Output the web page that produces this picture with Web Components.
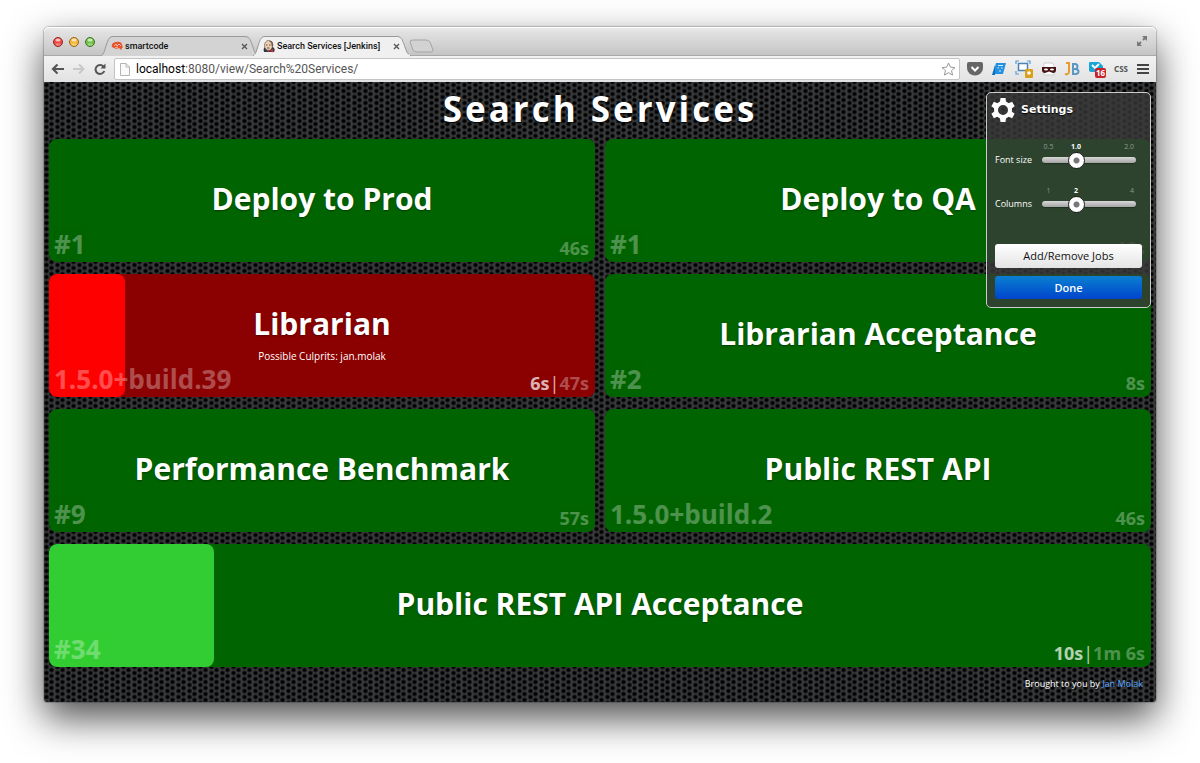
<!DOCTYPE html>
<html lang="en">
<head>
<meta charset="utf-8">
<title>Search Services [Jenkins]</title>
<style>
  body { margin: 0; background: #fff; font-family: "Open Sans", "Noto Sans", sans-serif; }
</style>
</head>
<body>
<browser-window>
  <browser-tab slot="tabs" label="smartcode">
    <svg slot="icon" width="12" height="10" viewBox="0 0 12 10"><path d="M1 6C0 4 2 1 5 1c3-1 6 0 6 3 1 1 1 3 0 3l-1 2-2-2-3 1-2-1z" fill="#e8532b"/><path d="M3 5l2-2 1 2 2-2 2 2M4 7l3-1" stroke="#fbd0c0" fill="none" stroke-width=".8"/></svg>
  </browser-tab>
  <browser-tab slot="tabs" label="Search Services [Jenkins]" active>
    <svg slot="icon" width="12" height="13" viewBox="0 0 12 13"><path d="M1 12C0 9 1 8 2 7L10 7c2 2 2 3 1 5z" fill="#2e3a4a"/><ellipse cx="5.500" cy="5.500" rx="4" ry="5" fill="#efd0b0" stroke="#6d5d50" stroke-width=".7"/><path d="M6 1C9 0 11 3 10 7L8.500 6C9 4 8 2 6 1z" fill="#6d5d50"/><path d="M3 5h1.500M6 5h1.500M4 8h2.500" stroke="#333" stroke-width=".8"/><path d="M5 9.500l5 3V9l-5 3z" fill="#d33"/></svg>
  </browser-tab>
  <build-wall heading="Search Services">
    <job-tile name="Deploy to Prod" build="#1" last="46s"></job-tile>
    <job-tile name="Deploy to QA" build="#1" last="46s"></job-tile>
    <job-tile name="Librarian" build="1.5.0+build.39" elapsed="6s" last="47s" progress="14" failing>Possible Culprits: jan.molak</job-tile>
    <job-tile name="Librarian Acceptance" build="#2" last="8s"></job-tile>
    <job-tile name="Performance Benchmark" build="#9" last="57s"></job-tile>
    <job-tile name="Public REST API" build="1.5.0+build.2" last="46s"></job-tile>
    <job-tile name="Public REST API Acceptance" build="#34" elapsed="10s" last="1m 6s" progress="15" wide></job-tile>
    <settings-panel slot="overlay"></settings-panel>
  </build-wall>
</browser-window>

<script>
class ShadowElement extends HTMLElement {
  connectedCallback() {
    if (this.shadowRoot) return;
    this.attachShadow({ mode: "open" }).innerHTML = this.render();
  }
}
const button = (c, edge) => `<svg width="10" height="10" viewBox="0 0 10 10"><circle cx="5" cy="5" r="4.5" fill="${c}" stroke="${edge}"/><ellipse cx="5" cy="3" rx="2.5" ry="1.5" fill="#fff" opacity=".65"/><ellipse cx="5" cy="7.5" rx="2.5" ry="1.2" fill="#fff" opacity=".3"/></svg>`;

customElements.define("browser-window", class extends ShadowElement {
  render() { return `
<style>
  :host { display: block; padding: 27px 44px 61px; }
  .window { border-radius: 5px 5px 3px 3px; box-shadow: 0 16px 38px rgba(0,0,0,.7), 0 0 1px 1px rgba(0,0,0,.2); }
  .strip { display: flex; align-items: flex-end; height: 29px; border-radius: 5px 5px 0 0;
    background: linear-gradient(#ececec, #e0e0e0 20%, #c4c4c4); box-shadow: inset 0 1px #fff, inset 0 -1px #a8a8a8; }
  .lights { display: flex; gap: 6px; padding: 0 7px 9px 9px; }
  .new { width: 28px; height: 15px; margin: 0 0 2px 0; }
  .full { margin: 0 8px 9px auto; }
  svg { display: block; }
  .bar { display: flex; align-items: center; height: 26px; padding: 0 7px; box-sizing: border-box; background: linear-gradient(#f2f2f2, #e2e2e2); }
  .bar > svg { flex: none; }
  .nav { display: flex; gap: 8px; width: 63px; }
  .address { flex: 1; min-width: 0; display: flex; align-items: center; height: 22px; box-sizing: border-box; border: 1px solid #c4c4c4; border-radius: 2px; background: #fff; padding: 0 3px 0 5px; }
  .address div { flex: 1; margin-left: 6px; font: 12px/18px Roboto, sans-serif; color: #555; white-space: nowrap; }
  b { font-weight: 400; color: #000; }
  .tools { display: flex; align-items: center; gap: 8px; margin-left: 7px; }
  .css { font: 700 8px/16px "Noto Sans", sans-serif; color: #555; }
</style>
<div class="window">
  <div class="strip">
    <div class="lights">${button("#ee4b46", "#8d2a27")}${button("#f6b73c", "#96651a")}${button("#74c348", "#3c7425")}</div>
    <slot name="tabs"></slot>
    <svg class="new" viewBox="0 0 28 15"><path d="M4 3q0-2 3-2h13q3 0 4 2l3 8q0 2-2 2H11q-3 0-4-2z" fill="#d2d2d2" stroke="#a4a4a4"/></svg>
    <svg class="full" width="12" height="12" viewBox="0 0 12 12"><path d="M6 1h5v5zM1 6v5h5z" fill="#777"/><path d="M7 5l3-3M5 7l-3 3" stroke="#777" stroke-width="1.800"/></svg>
  </div>
  <div class="bar">
    <div class="nav">
      <svg width="13" height="12" viewBox="0 0 13 12"><path d="M13 6H2M6.500 1.500L2 6l4.500 4.500" fill="none" stroke="#555" stroke-width="2.200"/></svg>
      <svg width="13" height="12" viewBox="0 0 13 12"><path d="M1 6h10M7 1.500L11.500 6 7 10.500" fill="none" stroke="#c8c8c8" stroke-width="2"/></svg>
      <svg width="13" height="12" viewBox="0 0 13 12"><path d="M10.500 3.500A4.500 4.500 0 1 0 11.300 8" fill="none" stroke="#555" stroke-width="2"/><path d="M12.500 .5v5h-5z" fill="#555"/></svg>
    </div>
    <div class="address">
      <svg width="10" height="13" viewBox="0 0 10 13"><path d="M.5.5h5.500l3.500 3.500v8.500h-9zM6 .5V4h3.500" fill="#fafafa" stroke="#b4b4b4"/></svg>
      <div><b>localhost</b>:8080/view/Search%20Services/</div>
      <svg width="15" height="14" viewBox="0 0 15 14"><path d="M7.500 1l1.900 4.200 4.600.4-3.500 3 1.100 4.500-4.100-2.400-4.100 2.400 1.100-4.500-3.500-3 4.600-.4z" fill="#fff" stroke="#999"/></svg>
    </div>
    <div class="tools">
      <svg width="16" height="14" viewBox="0 0 16 14"><path d="M2 0h12q2 0 2 2v4a8 7.500 0 0 1-16 0V2q0-2 2-2z" fill="#666"/><path d="M4.500 5L8 8.500 11.500 5" fill="none" stroke="#fff" stroke-width="2"/></svg>
      <svg width="16" height="14" viewBox="0 0 16 14"><path d="M5 1h10l-3 11H2z" fill="#2490e0"/><path d="M1 13L4 3v10z" fill="#0d6dc0"/><path d="M7 3.500h5M6.500 6h1.500m2 0h1.500M8 9h2" stroke="#d5efff"/></svg>
      <svg width="19" height="18" viewBox="0 0 19 18"><path d="M1 4V1h3M12 1h3v3M1 11v3h3" fill="none" stroke="#5a9bd0" stroke-width="1.200"/><path d="M3.500 3.500h9v7h-9z" fill="#fff" stroke="#4a85b8" stroke-width="1.500"/><rect x="10" y="9" width="8" height="9" rx="1" fill="#d9a01c"/><circle cx="14" cy="13" r="1.800" fill="#fff"/></svg>
      <svg width="14" height="14" viewBox="0 0 14 14"><path d="M2 1h8l2 2v10H2z" fill="#fff" stroke="#ccc"/><path d="M0 5h14v3q0 3-3 3L7 9.500 3 11Q0 11 0 8z" fill="#451313"/><ellipse cx="4" cy="7.500" rx="2" ry="1" fill="#fff"/><ellipse cx="10" cy="7.500" rx="2" ry="1" fill="#fff"/></svg>
      <svg width="16" height="16" viewBox="0 0 16 16"><path d="M2 2h3v8q0 4-4 3" fill="none" stroke="#e99a2b" stroke-width="2"/><path d="M9 13V3h2q2.500 0 2.500 2.500T11 8H9h2q3.500 0 3.500 2.500T11 13z" fill="none" stroke="#5b97c3" stroke-width="2"/></svg>
      <svg width="18" height="18" viewBox="0 0 18 18"><path d="M2 2h9l4 4v6H3q-2 0-2-2V3q0-1 1-1z" fill="#19a5d5"/><path d="M4 5l3 3 4-4" fill="none" stroke="#fff" stroke-width="1.800"/><rect x="7" y="8" width="11" height="10" rx="2" fill="#c9202a"/><text x="12.500" y="16" text-anchor="middle" font-family="Open Sans" font-size="8" font-weight="700" fill="#fff">16</text></svg>
      <span class="css">CSS</span>
      <svg width="13" height="12" viewBox="0 0 13 12"><path d="M1 2h12M1 6h12M1 10h12" stroke="#444" stroke-width="2"/></svg>
    </div>
  </div>
  <slot></slot>
</div>`; }
});

customElements.define("browser-tab", class extends ShadowElement {
  render() {
    const on = this.hasAttribute("active");
    return `
<style>
  :host { display: block; position: relative; width: 152px; height: 20px; z-index: ${on ? 1 : 0}; }
  .edge { position: absolute; inset: 0; width: 100%; height: 100%; overflow: visible; }
  .row { position: relative; display: flex; align-items: center; gap: 2px; height: 20px; padding: 0 6px 0 9px; font: 500 9px/20px Roboto, sans-serif; color: #111; white-space: nowrap; }
  .x { margin-left: auto; }
</style>
<svg class="edge" viewBox="0 0 152 20" preserveAspectRatio="none"><path d="M-1 20C4 18 4 1 10 .5H144C151 1 150 18 157 20" fill="${on ? "#f0f0f0" : "#d3d3d3"}" stroke="#999"/>${on ? '<path d="M0 19.500h156" stroke="#f0f0f0" stroke-width="2"/>' : ""}</svg>
<div class="row"><slot name="icon"></slot><span>${this.getAttribute("label")}</span>
<svg class="x" width="7" height="7" viewBox="0 0 7 7"><path d="M1 1l5 5M6 1L1 6" stroke="#555" stroke-width="1.300"/></svg></div>`; }
});

customElements.define("build-wall", class extends ShadowElement {
  render() { return `
<style>
  :host { display: block; position: relative; padding: 0 5px; color: #fff; border-radius: 0 0 3px 3px; background-color: #38393b;
    background-image: radial-gradient(circle, #000 0 1px, transparent 3px), radial-gradient(circle, #000 0 1px, transparent 3px);
    background-size: 11px 6px; background-position: -3px 0, 2px 3px; }
  h1 { margin: 0; height: 57px; font-size: 35px; line-height: 53px; font-weight: 700; letter-spacing: 3px; text-align: center; text-shadow: 0 1px 2px #000; }
  main { display: grid; grid-template-columns: 1fr 1fr; gap: 12px 10px; }
  footer { padding: 11px 8px 12px; font-size: 9px; line-height: 12px; text-align: right; }
  a { color: #5aa9ff; text-decoration: none; }
</style>
<h1>${this.getAttribute("heading")}</h1>
<main><slot></slot></main>
<footer>Brought to you by <a href="#">Jan Molak</a></footer>
<slot name="overlay"></slot>`; }
});

customElements.define("job-tile", class extends ShadowElement {
  render() {
    const a = n => this.getAttribute(n);
    const bad = this.hasAttribute("failing");
    return `
<style>
  :host { display: grid; position: relative; height: 123px; border-radius: 8px; overflow: hidden; background: ${bad ? "#8b0000" : "#006400"}; }
  :host([wide]) { grid-column: 1 / -1; }
  .progress { position: absolute; inset: 0 auto 0 0; width: ${a("progress") || 0}%; border-radius: 8px; background: ${bad ? "#f00" : "#32cd32"}; }
  .title, .meta { grid-area: 1 / 1; position: relative; }
  .title { display: flex; flex-direction: column; justify-content: center; padding-bottom: 3px; text-align: center; }
  h2 { margin: 0; font-size: 30px; line-height: 40px; font-weight: 700; text-shadow: 0 1px 2px rgba(0,0,0,.4); }
  p { margin: 4px 0 0; font-size: 10px; line-height: 16px; }
  .meta { display: flex; justify-content: space-between; align-items: flex-end; padding: 0 6px 0 5px; font-weight: 700; }
  .build { font-size: 26px; line-height: 36px; opacity: .3; }
  .time { font-size: 18px; line-height: 28px; }
  .last { opacity: .3; }
  .elapsed { opacity: .7; }
  .bar { font-weight: 400; opacity: .7; }
</style>
${a("progress") ? '<div class="progress"></div>' : ""}
<div class="title"><h2>${a("name")}</h2>${this.textContent.trim() ? "<p><slot></slot></p>" : ""}</div>
<div class="meta"><span class="build">${a("build")}</span><span class="time">${a("elapsed") ? `<span class="elapsed">${a("elapsed")}</span><span class="bar">|</span>` : ""}<span class="last">${a("last")}</span></span></div>`; }
});

customElements.define("setting-slider", class extends ShadowElement {
  render() {
    const a = n => this.getAttribute(n);
    return `
<style>
  :host { display: grid; grid-template-columns: 47px 94px; height: 44px; align-content: start; font-size: 9px; }
  label { line-height: 18px; }
  .marks { grid-column: 2; display: grid; grid-template-columns: 13px 42px 1fr; font-size: 7px; line-height: 8px; text-align: center; color: #909890; }
  .marks b { color: #fff; }
  .marks span:last-child { text-align: right; padding-right: 2px; }
  input { appearance: none; width: 94px; height: 18px; margin: 0; background: transparent; }
  input::-webkit-slider-runnable-track { height: 6px; border-radius: 3px; background: linear-gradient(#d8d8d8, #a4a4a4); box-shadow: 0 1px 1px rgba(0,0,0,.3); }
  input::-webkit-slider-thumb { appearance: none; width: 17px; height: 17px; margin-top: -5px; border-radius: 50%; border: 1px solid #222; background: radial-gradient(circle, #777 0 2.500px, #fff 3.500px); }
</style>
<div class="marks"><span>${a("min")}</span><b>${a("value")}</b><span>${a("max")}</span></div>
<label for="range">${a("label")}</label>
<input id="range" type="range" min="${a("min")}" max="${a("max")}" step="any" value="${a("value")}">`; }
});

customElements.define("settings-panel", class extends ShadowElement {
  render() {
    const teeth = [0, 60, 120, 180, 240, 300].map(r => `<path d="M8.800 5L9.500 0h5l.7 5z" transform="rotate(${r} 12 12)"/>`).join("");
    return `
<style>
  :host { position: absolute; top: 10px; right: 5px; width: 165px; height: 216px; box-sizing: border-box; padding: 4px 8px 0; border: 1px solid #ccc; border-radius: 5px; background: rgba(58,58,58,.78); }
  header { display: flex; align-items: center; gap: 6px; height: 26px; margin: 0 0 20px -4px; }
  h2 { margin: 0; font: 700 11px/16px "DejaVu Sans", sans-serif; text-shadow: 0 1px 1px #000; }
  button { display: block; width: 100%; height: 24px; margin: 0 0 8px; padding: 0; border: 0; border-radius: 3px; font: 11px/20px "Open Sans", sans-serif; color: #111; background: linear-gradient(#fff, #e4e4e4); }
  .done { height: 23px; color: #fff; background: linear-gradient(#0a80d0, #0044cc); font-weight: 600; }
  .controls { height: 101px; }
</style>
<header><svg width="24" height="24" viewBox="0 0 24 24" fill="#fff">${teeth}<circle cx="12" cy="12" r="7" fill="none" stroke="#fff" stroke-width="4"/></svg><h2>Settings</h2></header>
<div class="controls">
  <setting-slider label="Font size" min="0.5" value="1.0" max="2.0"></setting-slider>
  <setting-slider label="Columns" min="1" value="2" max="4"></setting-slider>
</div>
<button type="button">Add/Remove Jobs</button>
<button type="button" class="done">Done</button>`; }
});
</script>
</body>
</html>
